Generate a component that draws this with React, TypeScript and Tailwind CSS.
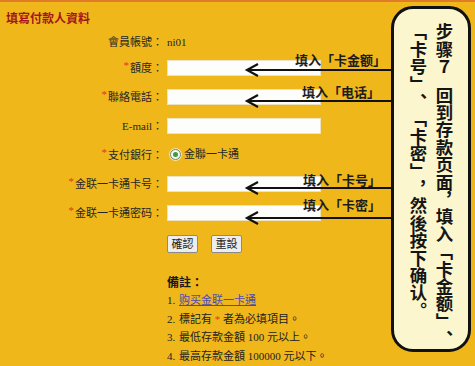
import React from "react";

const serif = "font-['Liberation_Serif','Noto_Sans_CJK_TC',serif]";

function Star() {
    return <span className="text-[#e2381c] text-[11px] leading-none mb-[4px] mr-[1px]">*</span>;
}

function Row({ h, label, required, children }: { h: string; label: string; required?: boolean; children: React.ReactNode }) {
    return (
        <div className={`flex ${h}`}>
            <div className="w-[163px] flex justify-end items-center">
                {required && <Star />}
                <span className="leading-[14px]">{label}</span>
            </div>
            <div className="pl-[4px] flex items-center">{children}</div>
        </div>
    );
}

function Field() {
    return <input type="text" className="w-[154px] h-[16px] bg-[#fdfdfb] border border-[#ece3c4] outline-none" />;
}

const arrows = [70, 101, 188, 218];

const notes = [
    { id: 2, text: <>標記有 <span className="text-[#e2381c]">*</span> 者為必填項目。</> },
    { id: 3, text: <>最低存款金額 100 元以上。</> },
    { id: 4, text: <>最高存款金額 100000 元以下。</> },
];

export default function App() {
    return (
        <div className={`relative w-[475px] h-[366px] overflow-hidden bg-[#f0b71b] border-t-2 border-[#e07b2a] text-[11px] text-[#262626] ${serif}`}>
            <h1 className="pl-[6px] pt-[9px] leading-[16px] text-[12px] font-bold text-[#a3171c]">填寫付款人資料</h1>

            {/* form */}
            <div className="mt-[4px]">
                <Row h="h-[22px]" label="會員帳號：">
                    <span>ni01</span>
                </Row>
                <Row h="h-[29px]" label="額度：" required>
                    <Field />
                </Row>
                <Row h="h-[29px]" label="聯絡電話：" required>
                    <Field />
                </Row>
                <Row h="h-[29px]" label="E-mail：">
                    <Field />
                </Row>
                <Row h="h-[29px]" label="支付銀行：" required>
                    <span className="ml-[3px] w-[11px] h-[11px] rounded-full border border-[#6f8a6f] bg-[#f6f6f6] flex items-center justify-center shadow-[0_0_0_1px_#f3e2a0]">
                        <span className="w-[5px] h-[5px] rounded-full bg-[#3c9c3c]" />
                    </span>
                    <span className="ml-[3px]">金聯一卡通</span>
                </Row>
                <Row h="h-[29px]" label="金联一卡通卡号：" required>
                    <Field />
                </Row>
                <Row h="h-[29px]" label="金联一卡通密码：" required>
                    <Field />
                </Row>
            </div>

            <div className="pl-[167px] pt-[8px] flex gap-[13px]">
                <button className="h-[18px] w-[31px] border border-[#8a8a8a] rounded-[2px] bg-[#ededed] text-[11px] leading-none text-[#222]">確認</button>
                <button className="h-[18px] w-[31px] border border-[#8a8a8a] rounded-[2px] bg-[#ededed] text-[11px] leading-none text-[#222]">重設</button>
            </div>

            {/* notes */}
            <div className="pl-[167px] mt-[22px] text-[#222]">
                <p className="font-bold text-[12px] leading-[16px] text-[#1a1a1a]">備註：</p>
                <ol className="leading-[18.5px]">
                    <li>
                        <span className="inline-block w-[12px]">1.</span>
                        <span className="underline text-[#4b4bb2]">购买金联一卡通</span>
                    </li>
                    {notes.map((n) => (
                        <li key={n.id}>
                            <span className="inline-block w-[12px]">{n.id}.</span>
                            {n.text}
                        </li>
                    ))}
                </ol>
            </div>

            {/* annotation arrows */}
            <svg className="absolute left-0 top-0 pointer-events-none" width="475" height="366">
                {arrows.map((y) => (
                    <g key={y} stroke="#111" strokeWidth="2.2" fill="none">
                        <line x1="247" y1={y - 2} x2="392" y2={y - 2} />
                        <path d={`M258 ${y - 8} L247 ${y - 2} L258 ${y + 4}`} />
                    </g>
                ))}
            </svg>
            <div className="absolute left-[295px] top-[50px] text-[13px] leading-[16px] font-bold text-[#1c1c1c] font-['Noto_Sans_CJK_SC',sans-serif]">填入「卡金额」</div>
            <div className="absolute left-[302px] top-[82px] text-[13px] leading-[16px] font-bold text-[#1c1c1c] font-['Noto_Sans_CJK_SC',sans-serif]">填入「电话」</div>
            <div className="absolute left-[303px] top-[170px] text-[13px] leading-[16px] font-bold text-[#1c1c1c] font-['Noto_Sans_CJK_SC',sans-serif]">填入「卡号」</div>
            <div className="absolute left-[303px] top-[195px] text-[13px] leading-[16px] font-bold text-[#1c1c1c] font-['Noto_Sans_CJK_SC',sans-serif]">填入「卡密」</div>

            {/* step callout */}
            <div className="absolute left-[391px] top-[4px] w-[80px] h-[346px] border-[3.5px] border-[#111] rounded-[22px] bg-[#fbf6cd] flex justify-center">
                <div className="[writing-mode:vertical-rl] [text-spacing-trim:space-all] whitespace-nowrap pt-[14px] text-[17.4px] leading-[26px] font-bold text-[#151515] font-['Noto_Sans_CJK_SC',sans-serif]">
                    步骤<span className="mb-[11px]">７</span>回到存款页面，填入「卡金额」、
                    <br />
                    「卡号」、「卡密」，然後按下确认。
                </div>
            </div>
        </div>
    );
}
